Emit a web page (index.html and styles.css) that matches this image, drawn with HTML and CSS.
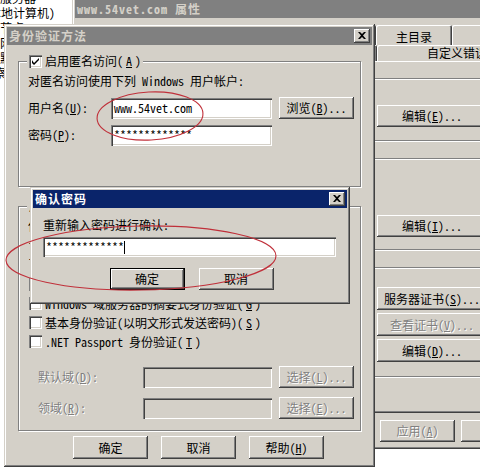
FILE: index.html
```html
<!DOCTYPE html>
<html lang="zh-CN">
<head>
<meta charset="utf-8">
<title>身份验证方法</title>
<link rel="stylesheet" href="styles.css">
</head>
<body>
<div class="desk">
  <div class="tree">
    <div class="tree-inner">
      <div class="trow in3">服务器</div>
      <div class="trow in1">(本地计算机)</div>
      <div class="trow in3">节点</div>
      <div class="trow in3">网站</div>
      <div class="trow in3">默认网站</div>
      <div class="trow">观察</div>
    </div>
  </div>

  <div class="win props">
    <div class="title inactive"><span class="lat">www.54vet.com</span>&nbsp;属性</div>
    <div class="props-body">
      <div class="tabrow row1">
        <div class="tab t99">网站</div>
        <div class="tab t98">性能</div>
        <div class="tab t98">ISAPI 筛选器</div>
        <div class="tab t76">主目录</div>
        <div class="tab t80">文档</div>
      </div>
      <div class="tabrow row2">
        <div class="tab t149">目录安全性</div>
        <div class="tab t149">HTTP 头</div>
        <div class="tab t160">自定义错误</div>
      </div>
      <div class="panel">
        <div class="pgroup pg1">
          <p class="pdesc">允许匿名访问资源及编辑身份验证方法。</p>
          <div class="pcol"><div class="btn pbtn">编辑(<u>E</u>)...</div></div>
        </div>
        <div class="pgroup pg2">
          <p class="pdesc">使用 IP 地址或 Internet 域名授权或拒绝对资源的访问。</p>
          <div class="pcol"><div class="btn pbtn">编辑(<u>I</u>)...</div></div>
        </div>
        <div class="pgroup pg3">
          <p class="pdesc">访问资源时，要求安全通信并启用客户端证书。</p>
          <div class="pcol">
            <div class="btn pbtn">服务器证书(<u>S</u>)...</div>
            <div class="btn pbtn dis">查看证书(<u>V</u>)...</div>
            <div class="btn pbtn">编辑(<u>D</u>)...</div>
          </div>
        </div>
      </div>
      <div class="props-buttons">
        <div class="btn">确定</div>
        <div class="btn">取消</div>
        <div class="btn dis">应用(<u>A</u>)</div>
        <div class="btn">帮助</div>
      </div>
    </div>
  </div>

  <div class="win auth">
    <div class="title inactive">身份验证方法
      <div class="xbtn"><svg width="8" height="7" viewBox="0 0 8 7"><path d="M0 0h2l2 2 2-2h2L5 3.5 8 7H6L4 5 2 7H0l3-3.5z" fill="#000"/></svg></div>
    </div>
    <div class="auth-body">
      <div class="group g-anon">
        <div class="legend"><span class="cb"><svg width="7" height="7" viewBox="0 0 7 7"><path d="M0 2v3l2 2 5-5V0L2 5z" fill="#000"/></svg></span>启用匿名访问(<u>A</u>)</div>
        <p class="line first">对匿名访问使用下列 Windows 用户帐户:</p>
        <div class="frow r-user">
          <span class="flabel">用户名(<u>U</u>):</span>
          <span class="input wide">www.54vet.com</span>
          <span class="btn">浏览(<u>B</u>)...</span>
        </div>
        <div class="frow r-pass">
          <span class="flabel">密码(<u>P</u>):</span>
          <span class="input wide">*************</span>
        </div>
      </div>

      <div class="group g-auth">
        <div class="legend">用户访问需经过身份验证</div>
        <p class="line first">使用以下身份验证方法并在下列条件下，要求用户名和密码:</p>
        <p class="line">- 禁用了匿名访问，或</p>
        <p class="line">- 使用 NTFS 访问控制列表限制了访问权限</p>
        <div class="checks">
          <div class="crow"><span class="cb"></span>集成 Windows 身份验证(<u>N</u>)</div>
          <div class="crow"><span class="cb"></span>Windows 域服务器的摘要式身份验证(<u>G</u>)</div>
          <div class="crow"><span class="cb"></span>基本身份验证(以明文形式发送密码)(<u>S</u>)</div>
          <div class="crow"><span class="cb"></span>.NET Passport 身份验证(<u>T</u>)</div>
        </div>
        <div class="frow r-dom">
          <span class="flabel ind dis">默认域(<u>D</u>):</span>
          <span class="input narrow off"></span>
          <span class="btn dis">选择(<u>L</u>)...</span>
        </div>
        <div class="frow r-realm">
          <span class="flabel ind dis">领域(<u>R</u>):</span>
          <span class="input narrow off"></span>
          <span class="btn dis">选择(<u>E</u>)...</span>
        </div>
      </div>

      <div class="dlg-buttons">
        <div class="btn">确定</div>
        <div class="btn">取消</div>
        <div class="btn">帮助(<u>H</u>)</div>
      </div>
    </div>
  </div>

  <div class="win confirm">
    <div class="title active">确认密码
      <div class="xbtn"><svg width="8" height="7" viewBox="0 0 8 7"><path d="M0 0h2l2 2 2-2h2L5 3.5 8 7H6L4 5 2 7H0l3-3.5z" fill="#000"/></svg></div>
    </div>
    <div class="confirm-body">
      <p class="line">重新输入密码进行确认:</p>
      <div class="input full">*************<span class="caret"></span></div>
      <div class="confirm-buttons">
        <div class="btn default">确定</div>
        <div class="btn">取消</div>
      </div>
    </div>
  </div>

  <svg class="marks" width="480" height="470" viewBox="0 0 480 470">
    <ellipse cx="150" cy="116" rx="53" ry="24" transform="rotate(-3 150 116)"/>
    <ellipse cx="141" cy="258" rx="135" ry="32" transform="rotate(-1 141 258)"/>
  </svg>
</div>
</body>
</html>
```

FILE: styles.css
```css
* { box-sizing: border-box; }
html, body { margin: 0; padding: 0; }
body {
  width: 480px; height: 470px; overflow: hidden; background: #fff;
  font: 12px/14px "Noto Sans Mono CJK SC", "Noto Sans CJK SC", sans-serif;
  color: #000;
}
p { margin: 0; }
u { text-decoration: underline; text-underline-offset: 1px; }
.desk { position: relative; width: 480px; height: 470px; overflow: hidden; }

/* background tree view */
.tree { position: absolute; left: 0; top: 0; width: 72px; height: 470px; background: #fff; overflow: hidden; }
.tree-inner { margin: -10px 0 0 -18px; }
.trow { height: 15px; line-height: 15px; white-space: nowrap; }
.trow.in1 { padding-left: 1px; }
.trow.in3 { padding-left: 18px; }

/* windows */
.win {
  position: absolute; background: #d4d0c8; padding: 3px;
  display: flex; flex-direction: column; overflow: hidden;
  box-shadow: inset -1px -1px #404040, inset 1px 1px #d4d0c8, inset -2px -2px #808080, inset 2px 2px #fff;
}
.title {
  height: 18px; flex: none; display: flex; align-items: center;
  padding: 0 2px; font-weight: bold; letter-spacing: 1px; white-space: nowrap;
}
.title.inactive { background: #808080; color: #d4d0c8; }
.title.active { background: #0a246a; color: #fff; }
.xbtn {
  margin-left: auto; width: 16px; height: 14px; background: #d4d0c8;
  display: flex; align-items: center; justify-content: center;
  box-shadow: inset -1px -1px #404040, inset 1px 1px #fff, inset -2px -2px #808080;
}
.xbtn svg { display: block; margin: 0 1px 1px 0; }

/* controls */
.btn {
  width: 75px; height: 22px; flex: none; display: flex; align-items: center; justify-content: center;
  background: #d4d0c8; white-space: nowrap;
  box-shadow: inset -1px -1px #404040, inset 1px 1px #fff, inset -2px -2px #808080;
}
.btn.default {
  box-shadow: inset 0 0 0 1px #000, inset -2px -2px #404040, inset 2px 2px #fff, inset -3px -3px #808080;
}
.dis { color: #808080; text-shadow: 1px 1px #fff; }
.input {
  height: 21px; flex: none; background: #fff; padding: 0 3px; display: flex; align-items: center; white-space: nowrap;
  box-shadow: inset 1px 1px #808080, inset 2px 2px #404040, inset -1px -1px #fff, inset -2px -2px #d4d0c8;
}
.input.off { background: #d4d0c8; }
.caret { display: inline-block; width: 1px; height: 13px; background: #000; }
.cb {
  width: 13px; height: 13px; flex: none; background: #fff; display: inline-flex; align-items: center; justify-content: center;
  box-shadow: inset 1px 1px #808080, inset 2px 2px #404040, inset -1px -1px #fff, inset -2px -2px #d4d0c8;
}
.cb svg { display: block; }

.group {
  border: 1px solid #808080; box-shadow: inset 1px 1px #fff, 1px 1px #fff;
  padding: 0 6px 0 9px; flex: none;
}
.legend {
  margin: -8px 0 0 -1px; padding: 0 2px; height: 14px; width: fit-content;
  background: #d4d0c8; display: flex; align-items: center; gap: 3px; white-space: nowrap;
}

/* properties window */
.props { left: 72px; top: -3px; width: 470px; height: 452px; }
.props .title { padding-left: 2px; }
.props-body { flex: 1; padding: 7px 4px 0; display: flex; flex-direction: column; min-height: 0; }
.tabrow { display: flex; flex: none; white-space: nowrap; }
.row1 { height: 20px; padding-left: 2px; }
.row2 { height: 16px; }
.tab {
  height: 100%; flex: none; display: flex; justify-content: center; align-items: center;
  border-radius: 2px 2px 0 0;
  box-shadow: inset 1px 1px #fff, inset -1px 0 #404040, inset -2px 0 #808080;
}
.row1 .tab { padding-top: 3px; }
.t76 { width: 76px; } .t80 { width: 80px; } .t98 { width: 98px; } .t99 { width: 99px; }
.t149 { width: 149px; } .t160 { width: 160px; }
.panel {
  height: 352px; flex: none; padding: 17px 8px 0;
  box-shadow: inset 1px 1px #fff, inset -1px -1px #404040, inset -2px -2px #808080;
  display: flex; flex-direction: column;
}
.pgroup {
  border: 1px solid #808080; box-shadow: inset 1px 1px #fff, 1px 1px #fff;
  display: flex; padding: 0 39px 0 10px; flex: none; overflow: hidden;
}
.pdesc { flex: 1; padding-top: 14px; }
.pcol { width: 110px; flex: none; display: flex; flex-direction: column; gap: 3px; }
.pbtn { width: 110px; }
.pg1 { height: 63px; padding-top: 26px; }
.pg2 { height: 92px; margin-top: 17px; padding-top: 56px; }
.pg3 { height: 110px; margin-top: 17px; padding-top: 19px; }
.pg3 .pbtn { height: 23px; }
.props-buttons { display: flex; gap: 6px; margin-top: 7px; padding-left: 139px; flex: none; }

/* authentication dialog */
.auth { left: 4px; top: 24px; width: 371px; height: 443px; }
.auth-body { flex: 1; padding: 16px 11px 5px; display: flex; flex-direction: column; }
.g-anon { height: 126px; }
.g-auth { height: 225px; margin-top: 19px; }
.line { height: 14px; white-space: nowrap; }
.line.first { margin-top: 6px; }
.g-auth .line + .line { margin-top: 2px; }
.frow { display: flex; align-items: center; height: 22px; }
.r-user { margin-top: 9px; }
.r-pass { margin-top: 5px; }
.flabel { width: 83px; flex: none; white-space: nowrap; }
.flabel.ind { width: 115px; padding-left: 10px; }
.input.wide { width: 161px; }
.input.narrow { width: 129px; }
.frow .btn { margin-left: 7px; }
.checks { margin-top: 10px; }
.crow { height: 19px; display: flex; align-items: center; gap: 3px; padding-left: 1px; white-space: nowrap; }
.r-dom { margin-top: 15px; }
.r-realm { margin-top: 9px; }
.dlg-buttons { display: flex; gap: 13px; margin-top: 5px; padding-left: 55px; }
.dlg-buttons .btn { height: 23px; }

/* confirm dialog */
.confirm { left: 30px; top: 187px; width: 320px; height: 117px; }
.confirm-body { flex: 1; padding: 10px 11px 0 10px; display: flex; flex-direction: column; }
.input.full { margin-top: 5px; height: 20px; }
.confirm-buttons { display: flex; justify-content: center; gap: 14px; margin-top: 11px; padding-left: 4px; }

/* annotation */
.marks { position: absolute; left: 0; top: 0; pointer-events: none; }
.marks ellipse { fill: none; stroke: #c0303a; stroke-width: 1.1; }
```
